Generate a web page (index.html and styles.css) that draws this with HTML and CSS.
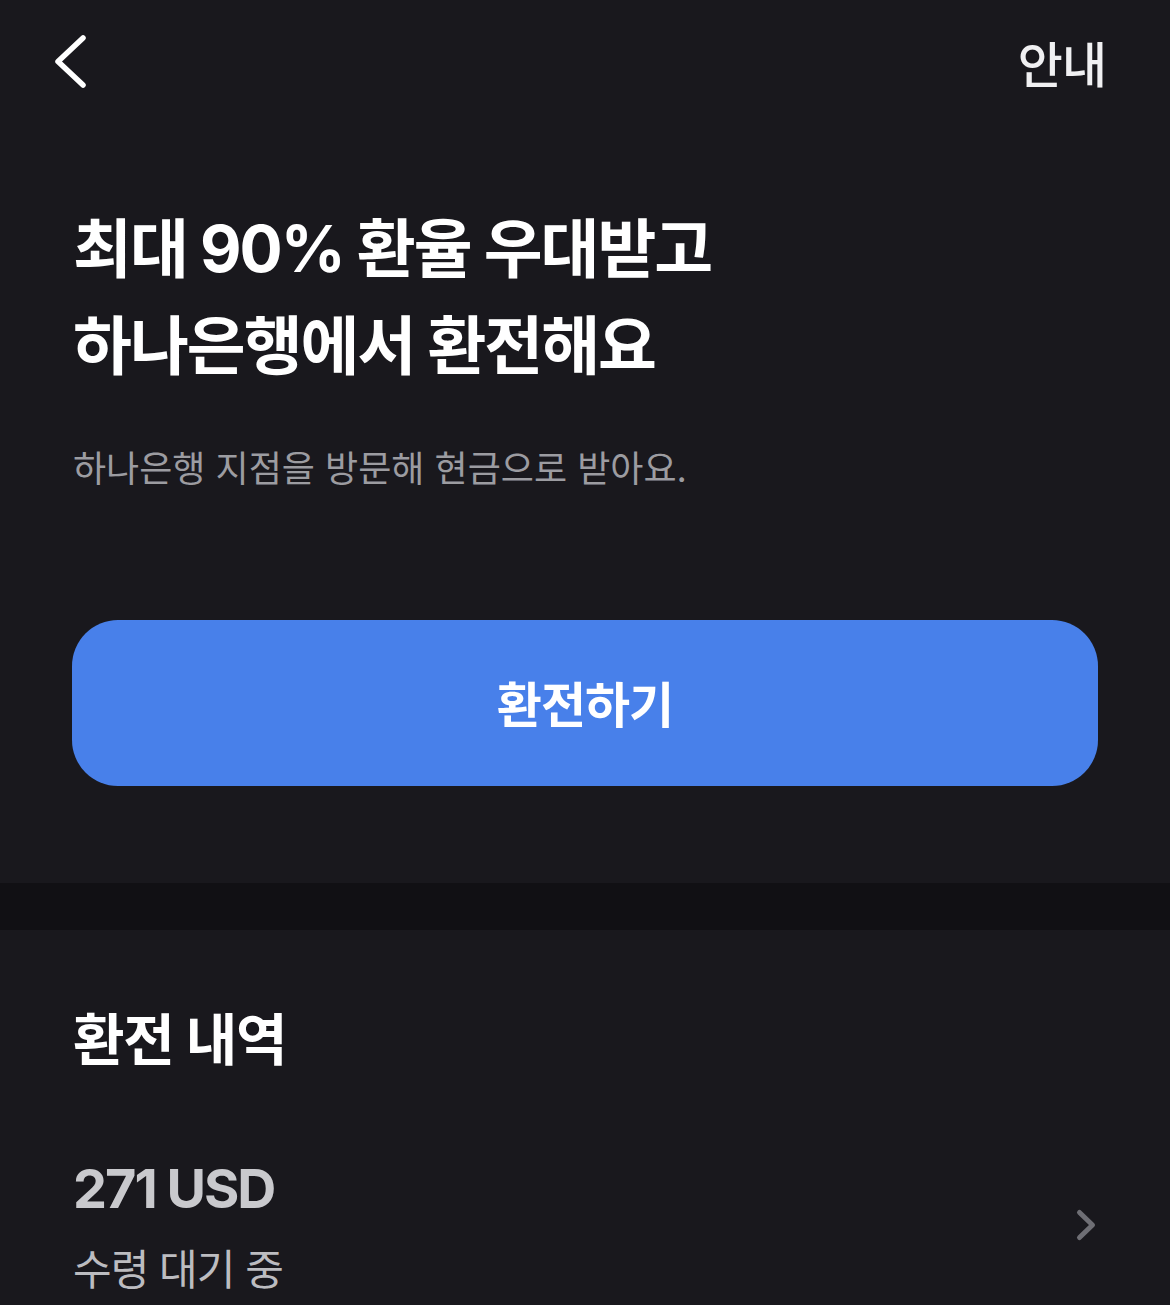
FILE: index.html
```html
<!DOCTYPE html>
<html lang="ko">
<head>
<meta charset="utf-8">
<title>환전</title>
<link rel="stylesheet" href="styles.css">
</head>
<body>
<div class="screen">
  <header class="nav">
    <svg class="back" width="44" height="60" viewBox="0 0 44 60" aria-label="뒤로">
      <path d="M35 6 L10 29.5 L35 53" fill="none" stroke="#ffffff" stroke-width="5.5" stroke-linecap="round" stroke-linejoin="round"/>
    </svg>
    <span class="nav-info">안내</span>
  </header>

  <section class="hero">
    <h1 class="headline">최대 90% 환율 우대받고<br>하나은행에서 환전해요</h1>
    <p class="sub">하나은행 지점을 방문해 현금으로 받아요.</p>
    <button class="cta">환전하기</button>
  </section>

  <div class="band"></div>

  <section class="history">
    <h2 class="history-title">환전 내역</h2>
    <div class="row">
      <div class="row-text">
        <div class="amount">271 USD</div>
        <div class="status">수령 대기 중</div>
      </div>
      <svg class="chev" width="24" height="36" viewBox="0 0 24 36">
        <path d="M5.5 5.5 L18.5 18 L5.5 30.5" fill="none" stroke="#6e6e74" stroke-width="5" stroke-linecap="round" stroke-linejoin="round"/>
      </svg>
    </div>
  </section>
</div>
</body>
</html>
```

FILE: styles.css
```css
html, body {
  margin: 0;
  padding: 0;
  background: #19181d;
}

body {
  font-family: Inter, "Noto Sans CJK KR", "Noto Sans", sans-serif;
  color: #ffffff;
}

.screen {
  width: 1170px;
  height: 1305px;
  overflow: hidden;
  background: #19181d;
}

.nav {
  height: 124px;
  display: flex;
  align-items: center;
  justify-content: space-between;
  padding: 0 64px 0 48px;
  box-sizing: border-box;
}

.back {
  display: block;
}

.nav-info {
  font-family: "Noto Sans CJK KR", sans-serif;
  font-size: 49px;
  font-weight: 500;
  color: #f0f0f2;
  letter-spacing: -1px;
  line-height: 60px;
}

.hero {
  padding: 76px 72px 97px 73px;
}

.headline {
  margin: 0;
  font-size: 64px;
  font-weight: 700;
  line-height: 97px;
  letter-spacing: -2px;
  color: #ffffff;
}

.sub {
  margin: 51px 0 0 0;
  font-size: 36px;
  font-weight: 400;
  line-height: 48px;
  letter-spacing: 0;
  color: #9c9ca1;
}

.cta {
  display: flex;
  align-items: center;
  justify-content: center;
  width: 1026px;
  height: 166px;
  margin: 127px 0 0 -1px;
  border: none;
  border-radius: 46px;
  background: #4880ea;
  color: #ffffff;
  font-family: "Noto Sans CJK KR", sans-serif;
  font-size: 49px;
  font-weight: 700;
  letter-spacing: -1px;
  padding: 0 0 4px 0;
}

.band {
  height: 47px;
  background: #111014;
}

.history {
  padding: 78px 72px 0 73px;
}

.history-title {
  margin: 0;
  font-size: 56px;
  font-weight: 700;
  line-height: 64px;
  letter-spacing: -1.2px;
  color: #ffffff;
}

.row {
  margin-top: 87px;
  display: flex;
  align-items: center;
  justify-content: space-between;
}

.row-text {
  display: flex;
  flex-direction: column;
}

.amount {
  font-size: 54px;
  font-weight: 700;
  line-height: 60px;
  letter-spacing: -2px;
  color: #c9c9cd;
}

.status {
  margin-top: 23px;
  font-size: 42px;
  font-weight: 400;
  line-height: 56px;
  letter-spacing: -1px;
  color: #bcbcc0;
}

.chev {
  display: block;
  margin-top: -8px;
}
```
